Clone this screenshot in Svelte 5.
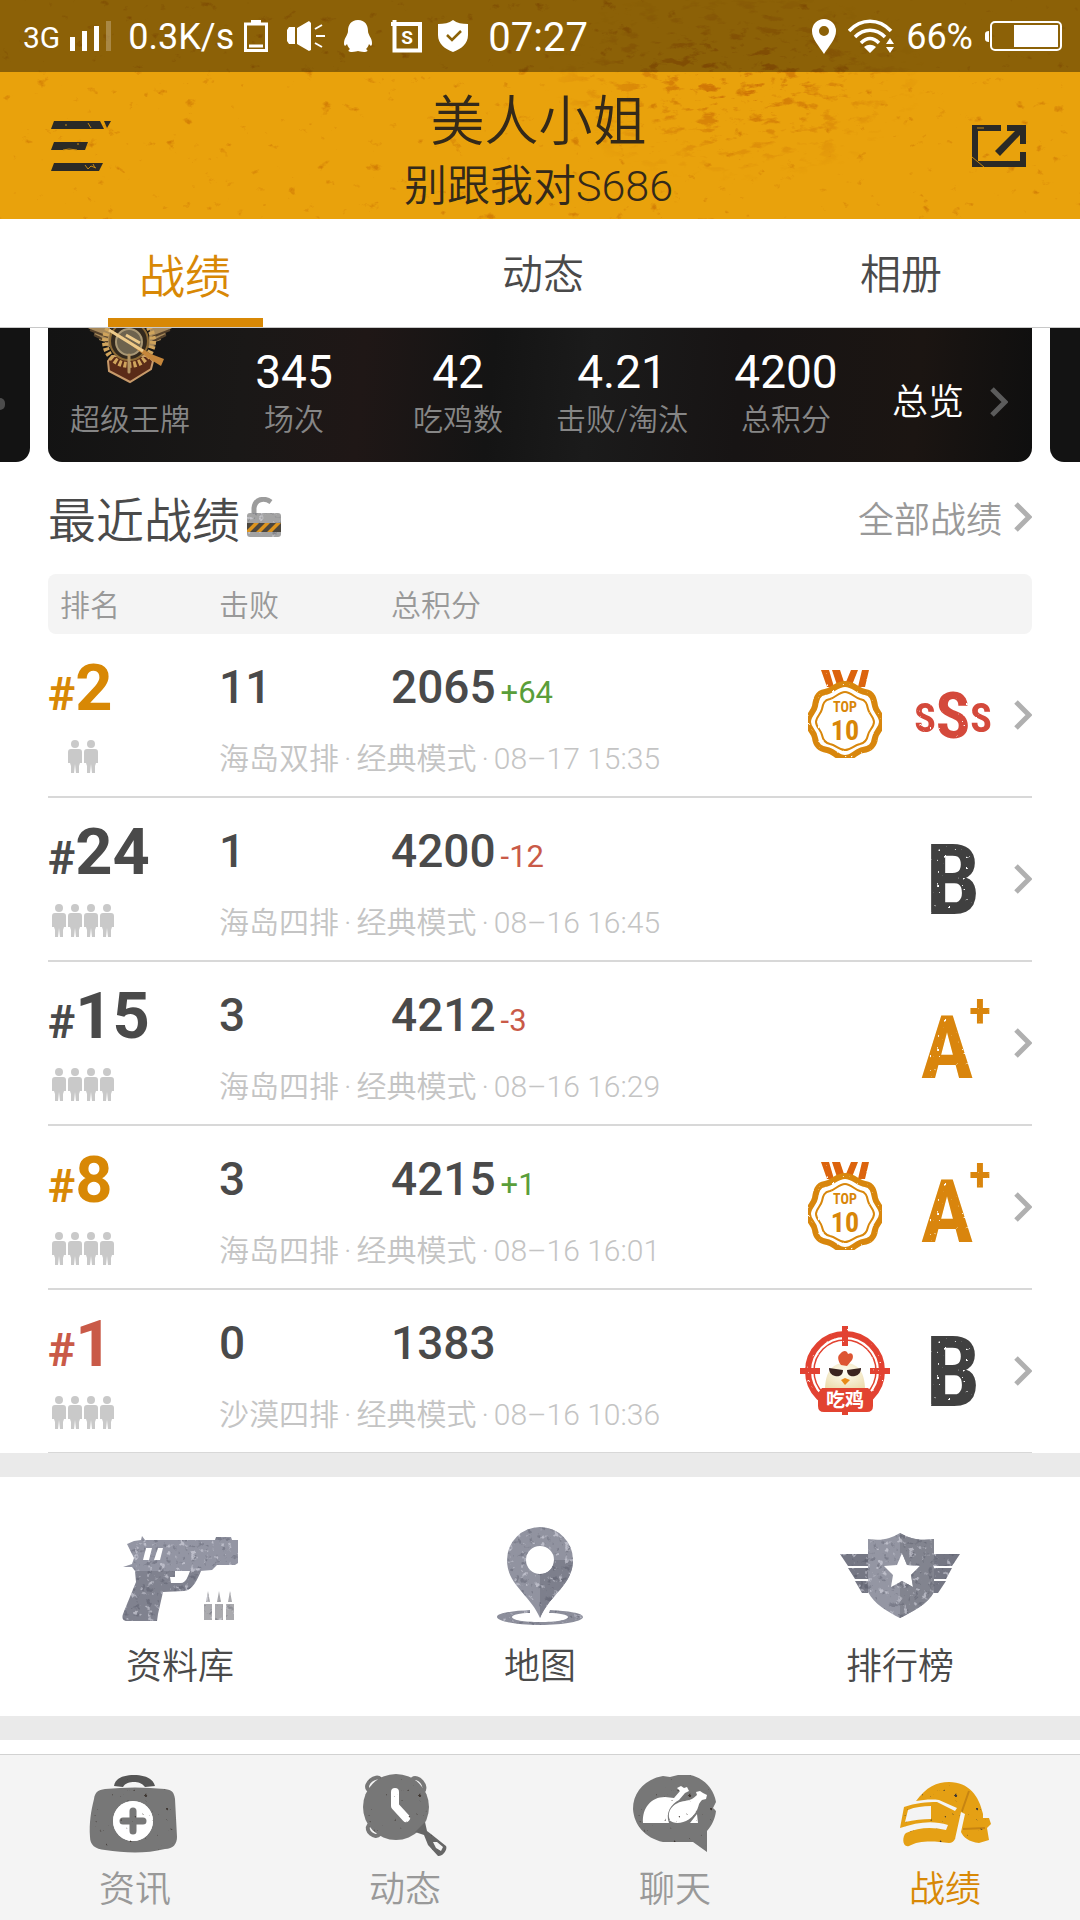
<script lang="ts">
	interface Match {
		rank: number;
		tone: 'gold' | 'dark' | 'red';
		players: number;
		kills: number;
		points: number;
		delta: string;
		map: string;
		time: string;
		medal: 'top10' | 'chicken' | '';
		grade: 'SSS' | 'A+' | 'B';
	}

	const tabs = ['战绩', '动态', '相册'];

	const stats = [
		{ value: '345', label: '场次' },
		{ value: '42', label: '吃鸡数' },
		{ value: '4.21', label: '击败/淘汰' },
		{ value: '4200', label: '总积分' }
	];

	const matches: Match[] = [
		{ rank: 2, tone: 'gold', players: 2, kills: 11, points: 2065, delta: '+64', map: '海岛双排', time: '08-17 15:35', medal: 'top10', grade: 'SSS' },
		{ rank: 24, tone: 'dark', players: 4, kills: 1, points: 4200, delta: '-12', map: '海岛四排', time: '08-16 16:45', medal: '', grade: 'B' },
		{ rank: 15, tone: 'dark', players: 4, kills: 3, points: 4212, delta: '-3', map: '海岛四排', time: '08-16 16:29', medal: '', grade: 'A+' },
		{ rank: 8, tone: 'gold', players: 4, kills: 3, points: 4215, delta: '+1', map: '海岛四排', time: '08-16 16:01', medal: 'top10', grade: 'A+' },
		{ rank: 1, tone: 'red', players: 4, kills: 0, points: 1383, delta: '', map: '沙漠四排', time: '08-16 10:36', medal: 'chicken', grade: 'B' }
	];

	let activeTab = $state('战绩');
	let activeNav = $state('战绩');
</script>

{#snippet chevron()}
	<svg class="chevron" width="18" height="30" viewBox="0 0 18 30" aria-hidden="true">
		<path d="M2 2l13 13L2 28" fill="none" stroke="currentColor" stroke-width="5" />
	</svg>
{/snippet}

{#snippet medal(kind: string)}
	{#if kind === 'top10'}
		<svg width="90" height="92" viewBox="0 0 90 92" role="img" aria-label="TOP 10">
			<g filter="url(#wear)">
				<path d="M21 1h8l5 17h-7zM32 1h8l4 12-7 3zM51 1h7l-6 15-6-3zM62 1h7l-4 17h-7z" fill="#dc6408" />
				<path
					d="M45 15C54 15 57 22 65 23C73 24 74 31 75 37C76 43 82 46 82 53C82 60 76 62 75 69C74 77 70 80 63 81C56 82 53 89 45 89C37 89 34 82 27 81C20 80 16 77 15 69C14 62 8 60 8 53C8 46 14 43 15 37C16 31 17 24 25 23C33 22 36 15 45 15Z"
					fill="none"
					stroke="#d88608"
					stroke-width="6"
				/>
				<path
					d="M45 23C51 23 55 29 60 30C66 31 67 35 68 40C69 45 74 48 74 53C74 58 69 61 68 66C67 71 65 74 60 75C54 76 51 81 45 81C39 81 36 76 30 75C25 74 23 71 22 66C21 61 16 58 16 53C16 48 21 45 22 40C23 35 24 31 30 30C35 29 39 23 45 23Z"
					fill="none"
					stroke="#d88608"
					stroke-width="2"
				/>
			</g>
			<text class="top-word" x="45" y="43">TOP</text>
			<text class="top-num" x="45" y="71">10</text>
		</svg>
	{:else if kind === 'chicken'}
		<svg width="90" height="90" viewBox="0 0 90 90" role="img" aria-label="吃鸡">
			<defs>
				<radialGradient id="egg" cx="0.5" cy="0.35" r="0.7">
					<stop offset="0" stop-color="#fffef4" />
					<stop offset="1" stop-color="#ecdcae" />
				</radialGradient>
			</defs>
			<g filter="url(#wear)" fill="none" stroke="#e24330">
				<circle cx="45" cy="45" r="37" stroke-width="6" />
				<circle cx="45" cy="45" r="31" stroke-width="1.5" />
				<path d="M45 0v20M0 45h20M70 45h20" stroke-width="6" />
			</g>
			<path d="M25 64C25 45 33 37 45 37S65 45 65 64Z" fill="url(#egg)" />
			<path d="M41 39c-3-4-4-9-1-11 3-4 7-4 8 0 5-3 6 3 4 6l-5 6z" fill="#dd5533" />
			<path d="M29 42l14 2c0 6-5 7-8 6-4-1-6-4-6-8zM61 42l-14 2c0 6 5 7 8 6 4-1 6-4 6-8z" fill="#3b2420" />
			<path d="M41 54l4-2 5 2-5 5z" fill="#e88b18" />
			<path d="M22 62h46l5 5v13q0 6-6 6H48v3h-6v-3H24q-6 0-6-6V67z" fill="#e24330" />
			<text class="chicken-word" x="45" y="81">吃鸡</text>
		</svg>
	{/if}
{/snippet}

{#snippet grade(name: string)}
	<svg width="80" height="120" viewBox="0 -15 80 120" role="img" aria-label={name}>
		<g class="grade" filter="url(#wear)">
			{#if name === 'SSS'}
				<text x="41" y="68" fill="#d4493b"><tspan font-size="40" dy="-6">S</tspan><tspan font-size="64" dy="6">S</tspan><tspan font-size="40" dy="-6">S</tspan></text>
			{:else if name === 'A+'}
				<text x="35" y="80" font-size="88" fill="#d98508">A</text>
				<text x="68" y="29" font-size="46" fill="#d98508">+</text>
			{:else}
				<text x="41" y="80" font-size="98" fill="#404040">B</text>
			{/if}
		</g>
	</svg>
{/snippet}

<svg class="defs" width="0" height="0" aria-hidden="true">
	<defs>
		<filter id="wear" x="0" y="0" width="100%" height="100%">
			<feTurbulence type="fractalNoise" baseFrequency="0.28" numOctaves="2" seed="8" result="noise" />
			<feColorMatrix in="noise" values="0 0 0 0 0  0 0 0 0 0  0 0 0 0 0  12 0 0 0 -8.8" result="holes" />
			<feComposite in="SourceGraphic" in2="holes" operator="out" />
		</filter>
		<filter id="metal" x="0" y="0" width="100%" height="100%" color-interpolation-filters="sRGB">
			<feTurbulence type="fractalNoise" baseFrequency="0.16" numOctaves="3" seed="5" result="noise" />
			<feColorMatrix in="noise" values="0 0 0 0 0.25  0 0 0 0 0.26  0 0 0 0 0.32  7 0 0 0 -4.2" result="dark" />
			<feColorMatrix in="noise" values="0 0 0 0 0.9  0 0 0 0 0.9  0 0 0 0 0.94  0 8 0 0 -5" result="light" />
			<feComposite in="dark" in2="SourceAlpha" operator="in" result="darkIn" />
			<feComposite in="light" in2="SourceAlpha" operator="in" result="lightIn" />
			<feComponentTransfer in="darkIn" result="darkSoft"><feFuncA type="linear" slope="0.3" /></feComponentTransfer>
			<feComponentTransfer in="lightIn" result="lightSoft"><feFuncA type="linear" slope="0.5" /></feComponentTransfer>
			<feMerge>
				<feMergeNode in="SourceGraphic" />
				<feMergeNode in="darkSoft" />
				<feMergeNode in="lightSoft" />
			</feMerge>
		</filter>
		<filter id="specks" x="0" y="0" width="100%" height="100%" color-interpolation-filters="sRGB">
			<feTurbulence type="fractalNoise" baseFrequency="0.2" numOctaves="2" seed="11" result="noise" />
			<feColorMatrix in="noise" values="0 0 0 0 0.25  0 0 0 0 0.22  0 0 0 0 0.2  12 0 0 0 -9" result="dark" />
			<feComposite in="dark" in2="SourceAlpha" operator="in" result="darkIn" />
			<feMerge>
				<feMergeNode in="SourceGraphic" />
				<feMergeNode in="darkIn" />
			</feMerge>
		</filter>
		<filter id="rust" x="0" y="0" width="100%" height="100%" color-interpolation-filters="sRGB">
			<feTurbulence type="fractalNoise" baseFrequency="0.06 0.08" numOctaves="5" seed="21" result="noise" />
			<feColorMatrix in="noise" values="0 0 0 0 0.83  0 0 0 0 0.5  0 0 0 0 0.02  6 0 0 0 -4.2" />
		</filter>
		<filter id="rust-fine" x="0" y="0" width="100%" height="100%" color-interpolation-filters="sRGB">
			<feTurbulence type="fractalNoise" baseFrequency="0.05 0.12" numOctaves="5" seed="4" result="noise" />
			<feColorMatrix in="noise" values="0 0 0 0 0.8  0 0 0 0 0.44  0 0 0 0 0.02  7 0 0 0 -4" />
		</filter>
		<radialGradient id="patch-fade" cx="0.5" cy="0.5" r="0.5">
			<stop offset="0" stop-color="#fff" />
			<stop offset="1" stop-color="#000" />
		</radialGradient>
		<mask id="patch" maskContentUnits="objectBoundingBox">
			<ellipse cx="0.68" cy="0.38" rx="0.18" ry="0.45" fill="url(#patch-fade)" />
		</mask>
	</defs>
</svg>

<div class="page">
	<div class="top">
		<svg class="texture" width="100%" height="100%" aria-hidden="true">
			<rect width="100%" height="100%" filter="url(#rust)" />
			<rect width="100%" height="100%" filter="url(#rust-fine)" mask="url(#patch)" />
		</svg>

		<div class="status">
			<span class="net">3G</span>
			<svg class="signal" width="42" height="30" viewBox="0 0 42 30" aria-hidden="true">
				<path d="M0 16h5v14H0zM12 10h5v20h-5zM24 5h5v25h-5z" fill="#fff" />
				<path d="M36 0h5v30h-5z" fill="#fff" opacity="0.25" />
			</svg>
			<span class="speed">0.3K/s</span>
			<svg class="low" width="24" height="32" viewBox="0 0 24 32" aria-hidden="true">
				<path d="M7 0h10v3H7z" fill="#fff" />
				<path d="M1.500 4h21v26.500h-21zM5 26h14" fill="none" stroke="#fff" stroke-width="3" />
			</svg>
			<svg class="sound" width="38" height="32" viewBox="0 0 38 32" aria-hidden="true">
				<path d="M2 7h6v17H2l-2-3V10zM10 8L22 1l2 2v27l-2 1-12-7z" fill="#fff" />
				<path d="M28 9l7-4M29 16h9M28 23l7 4" stroke="#fff" stroke-width="2" />
			</svg>
			<svg class="qq" width="28" height="32" viewBox="0 0 28 32" aria-hidden="true">
				<path d="M14 0c7 0 10 5 10 11 0 4 4 7 4 12 0 3-1 4-3 1-1 3-2 4-3 5 3 2 1 3-2 3-3 0-5-1-6-1s-3 1-6 1-5-1-2-3c-1-1-2-2-3-5-2 3-3 2-3-1 0-5 4-8 4-12C4 5 7 0 14 0z" fill="#fff" />
			</svg>
			<svg class="sbox" width="31" height="33" viewBox="0 0 31 33" aria-hidden="true">
				<path d="M3.500 0v30.500h25.500V4H0" fill="none" stroke="#fff" stroke-width="4" />
				<text x="16" y="24" text-anchor="middle" font-size="19" font-weight="700" fill="#fff">S</text>
			</svg>
			<svg class="guard" width="30" height="32" viewBox="0 0 30 32" aria-hidden="true">
				<path d="M15 0c4 3 9 4 15 4v11c0 9-7 14-15 17C7 29 0 24 0 15V4c6 0 11-1 15-4z" fill="#fff" />
				<path d="M9 15l5 5 9-9" fill="none" stroke="#8c6207" stroke-width="2.500" />
			</svg>
			<span class="clock">07:27</span>
			<svg class="place" width="24" height="35" viewBox="0 0 24 35" aria-hidden="true">
				<path d="M12 0a12 12 0 0 1 12 12c0 8-7 15-12 23C7 27 0 20 0 12A12 12 0 0 1 12 0zm0 7a5 5 0 1 0 0 10 5 5 0 0 0 0-10z" fill="#fff" />
			</svg>
			<svg class="wifi" width="46" height="34" viewBox="0 0 46 34" aria-hidden="true">
				<g fill="none" stroke="#fff" stroke-width="3.500">
					<path d="M1 12C13-1 31-1 43 12" />
					<path d="M7 18c9-9 21-9 30 0" />
					<path d="M13 24c6-6 12-6 18 0" />
				</g>
				<path d="M16 28c4-3 8-3 12 0l-6 6zM38 25l4-6 4 6zM38 28h8l-4 6z" fill="#fff" />
			</svg>
			<span class="percent">66%</span>
			<svg class="power" width="77" height="30" viewBox="0 0 77 30" aria-hidden="true">
				<path d="M4 10v11q-4 0-4-3v-5q0-3 4-3zM29 4h44v22H29z" fill="#fff" />
				<rect x="6" y="1" width="70" height="28" rx="4" fill="none" stroke="#fff" stroke-width="2" />
			</svg>
		</div>

		<header class="header">
			<button class="icon-btn" aria-label="menu">
				<svg width="60" height="50" viewBox="0 0 60 50">
					<path d="M3 0h46l4 8H0zM53 0h7l-4 7zM3 21h34l-3 8H0zM3 42h49l-4 8H0z" fill="#2b2a26" />
					<path d="M37 2l3 5M14 4h2M12 29l6-1 8 1M26 23h2M34 44l3 4 3-3 5 2M42 43l2 4" fill="none" stroke="#c98a10" stroke-width="1" />
				</svg>
			</button>
			<div class="names">
				<h1>美人小姐</h1>
				<p>别跟我对S686</p>
			</div>
			<button class="icon-btn share" aria-label="share">
				<svg width="54" height="42" viewBox="0 0 54 42">
					<path d="M29 3H3v36h48V27" fill="none" stroke="#2b2a26" stroke-width="6" />
					<path d="M35 0h19v19h-6v-9L28 31l-5-5L43 6h-8z" fill="#2b2a26" />
					<path d="M0 32l12 10M5 3h7" stroke="#c98a10" stroke-width="1" />
				</svg>
			</button>
		</header>
	</div>

	<nav class="tabs">
		{#each tabs as tab}
			<button class:active={activeTab === tab} onclick={() => (activeTab = tab)}>{tab}</button>
		{/each}
	</nav>

	<main>
		<div class="carousel">
			<div class="card side left"></div>
			<section class="card summary">
				<div class="stat tier">
					<svg class="emblem" width="84" height="58" viewBox="0 0 84 58" aria-hidden="true">
						<path d="M0 0h22l2 20-8-3 1-3-6-2 1-3-6-2 1-3zM84 0H62l-2 20 8-3-1-3 6-2-1-3 6-2-1-3z" fill="#a8895a" />
						<path d="M2 2l18 7M6 7l14 7M82 2L64 9M78 7l-14 7" stroke="#54402a" stroke-width="2" />
						<path d="M20 33l4-5h36l5 5-2 8-21 13-21-11z" fill="#5a2b18" stroke="#c79a6a" stroke-width="2" />
						<circle cx="41" cy="13" r="24" fill="none" stroke="#d0a45c" stroke-width="6" stroke-dasharray="3 2" />
						<circle cx="41" cy="13" r="19" fill="#33291d" stroke="#8c6a35" stroke-width="2" />
						<circle cx="41" cy="14" r="13" fill="#6d634e" stroke="#a99875" stroke-width="2" />
						<path d="M41 27v17" stroke="#b49563" stroke-width="3" stroke-linecap="round" />
						<path d="M22 1l41 25 13 5-3 7-13-8z" fill="#c5863b" />
						<path d="M21 2l34 21M38 7l14 8" stroke="#ecca8a" stroke-width="3" />
					</svg>
					<span class="stat-label">超级王牌</span>
				</div>
				{#each stats as stat}
					<div class="stat">
						<strong>{stat.value}</strong>
						<span class="stat-label">{stat.label}</span>
					</div>
				{/each}
				<a class="overview" href="#overview"><span>总览</span>{@render chevron()}</a>
			</section>
			<div class="card side right"></div>
			<span class="side-arrow"></span>
		</div>

		<section class="recent">
			<div class="recent-head">
				<h2>最近战绩</h2>
				<svg width="34" height="40" viewBox="0 0 34 40" aria-hidden="true">
					<path d="M7 17V11C8 2 17 0 24 5" fill="none" stroke="#9c9c9c" stroke-width="5" />
					<g filter="url(#metal)"><rect y="16" width="34" height="24" rx="3" fill="#a3a3a3" /></g>
					<path d="M0 26h34v9H0z" fill="#4b463e" />
					<path d="M0 35v-2l7-7h5l-9 9zM9 35l9-9h5l-9 9zM20 35l9-9h5l-9 9z" fill="#dc941e" />
				</svg>
				<a class="all" href="#all">全部战绩 {@render chevron()}</a>
			</div>

			<table>
				<thead>
					<tr>
						<th class="c-rank">排名</th>
						<th class="c-kills">击败</th>
						<th class="c-points">总积分</th>
						<th class="c-badges" aria-label="评级"></th>
					</tr>
				</thead>
				{#each matches as m}
					<tbody>
						<tr class="line-main">
							<td class="rank {m.tone}"><small>#</small>{m.rank}</td>
							<td class="num">{m.kills}</td>
							<td class="num">
								{m.points}{#if m.delta}<span class="delta" class:down={m.delta.startsWith('-')}>{m.delta}</span>{/if}
							</td>
							<td class="badges" rowspan="2">
								<a href="#match-{m.rank}" aria-label="详情">
									{@render medal(m.medal)}
									{@render grade(m.grade)}
									{@render chevron()}
								</a>
							</td>
						</tr>
						<tr class="line-sub">
							<td>
								<div class="players">
									{#each Array(m.players) as _}
										<svg width="14" height="33" viewBox="0 0 14 33" aria-hidden="true">
											<circle cx="7" cy="4" r="4" />
											<path d="M3 9h8q3 0 3 3v11h-2l-1 3v7H8l-1-9-1 9H3v-7l-1-3H0V12q0-3 3-3z" />
										</svg>
									{/each}
								</div>
							</td>
							<td colspan="2">
								<div class="meta">
									<span>{m.map}</span><span>·</span><span>经典模式</span><span>·</span><span class="time">{m.time.replace('-', '–')}</span>
								</div>
							</td>
						</tr>
					</tbody>
				{/each}
			</table>
		</section>

		<section class="tools">
			<a href="#library">
				<svg width="116" height="98" viewBox="0 -9 116 98" aria-hidden="true">
					<g filter="url(#metal)">
						<path d="M5 8l7-3 7-1 1-4 3 4h70l1-3h15l1 3h6v23l-3 2H95l-5 5-12 1H13l-3-4H1l9-3 2-6-4-8zM24 12l-3 12h6l3-12zm12 0l-4 12h6l3-12z" fill="#9395a3" fill-rule="evenodd" />
						<path d="M13 35h66c-4 9-8 19-17 20l-21 1-5 22-1 7H4q-5-1-3-7l13-32zM53 35v6h-5l1 6h10c5 0 7-7 9-12z" fill="#80828f" fill-rule="evenodd" />
						<path d="M82 68h8v16h-8zM93 68h8v16h-8zM104 68h8v16h-8zM84 66l2-11 2 11zM95 66l2-11 2 11zM106 66l2-11 2 11z" fill="#aaaaae" />
					</g>
				</svg>
				<span>资料库</span>
			</a>
			<a href="#map">
				<svg width="88" height="98" viewBox="0 0 88 98" aria-hidden="true">
					<g filter="url(#metal)">
						<path d="M34 83C16 84 1 86 1 90s18 8 43 8 43-4 43-8-15-6-33-7l-1 3c10 0 19 2 19 4 0 3-12 5-28 5s-28-2-28-5c0-2 8-4 18-4z" fill="#8c8e9b" />
						<path d="M44 0a33 33 0 0 1 33 33C77 58 54 67 44 91 34 67 11 58 11 33A33 33 0 0 1 44 0zm0 19a14 14 0 1 0 0 28 14 14 0 0 0 0-28z" fill="#9193a0" />
						<path d="M44 47c8 0 14-6 14-14h19C77 58 54 67 44 91z" fill="#7d7f8c" />
					</g>
				</svg>
				<span>地图</span>
			</a>
			<a href="#ranking">
				<svg width="120" height="98" viewBox="0 -6 120 98" aria-hidden="true">
					<g filter="url(#metal)">
						<path d="M0 21h28v12H8zM8 35h20v11H15zM15 48h13v12h-6zM120 21H94v12h18zM112 35H94v11h12zM106 48H94v12h4z" fill="#757784" />
						<path d="M28 6c14 2 22 0 32-6 10 6 20 8 34 6v53c-6 12-22 20-34 26-12-6-26-14-32-26zM62 20l-5 12-13 1 9 9-2 12 11-6 11 6-2-12 9-9-13-1z" fill="#9496a3" fill-rule="evenodd" />
						<path d="M60 49l2-1 11 6-2-12 9-9-13-1-5-12h-2V0c10 6 20 8 34 6v53c-6 12-22 20-34 26z" fill="#82848f" />
					</g>
				</svg>
				<span>排行榜</span>
			</a>
		</section>
	</main>

	<nav class="bottom">
		<button class:active={activeNav === '资讯'} onclick={() => (activeNav = '资讯')}>
			<svg width="92" height="84" viewBox="0 -2 92 84" filter="url(#specks)" aria-hidden="true">
				<path d="M25 11C26 3 35 0 45 0s19 3 21 11l-10 1c-3-4-7-5-11-5s-9 1-11 5z" fill="#555" />
				<path d="M16 14c20-2 40-2 60 0 7 1 9 3 10 10l2 38c0 7-4 12-12 12-20 5-40 4-60 1C6 74 1 70 1 62 0 48 2 36 5 24c1-7 4-9 11-10zM44 26a20 20 0 1 0 0 40 20 20 0 0 0 0-40z" fill="#777" fill-rule="evenodd" />
				<circle cx="44" cy="46" r="20" fill="#fff" />
				<path d="M44 36v20M34 46h20" stroke="#777" stroke-width="7" stroke-linecap="round" />
			</svg>
			<span>资讯</span>
		</button>
		<button class:active={activeNav === '动态'} onclick={() => (activeNav = '动态')}>
			<svg width="84" height="84" viewBox="0 -1 84 84" filter="url(#specks)" aria-hidden="true">
				<g fill="none" stroke="#777" stroke-width="4">
					<ellipse cx="11" cy="10" rx="8" ry="5" transform="rotate(-40 11 10)" />
					<ellipse cx="55" cy="11" rx="8" ry="5" transform="rotate(50 55 11)" />
					<ellipse cx="11" cy="56" rx="7" ry="5" transform="rotate(40 11 56)" />
				</g>
				<circle cx="33" cy="33" r="33" fill="#777" />
				<path d="M32 18v14l11 12" fill="none" stroke="#fff" stroke-width="8" stroke-linecap="round" stroke-linejoin="round" />
				<path d="M62 48l2 9 4 3 15 12c2 4-4 11-8 10l-10-11-4-10-9-3zM70 68l3 6 5 3 2-4-6-5z" fill="#666" fill-rule="evenodd" />
			</svg>
			<span>动态</span>
		</button>
		<button class:active={activeNav === '聊天'} onclick={() => (activeNav = '聊天')}>
			<svg width="84" height="84" viewBox="0 -2 84 84" filter="url(#specks)" aria-hidden="true">
				<path d="M30 1l7 1 8-2h12c14 3 24 14 26 27l-3 6 3 3c-1 8-4 14-9 20v21L60 67H30c-18-4-29-17-30-33C0 17 12 4 30 1z" fill="#777" />
				<path d="M10 48c-1-15 8-26 22-26l9 1 6-7-3-3 4-2 3 2 3-1 2 4-4 2-6 7C38 29 32 38 36 48z" fill="#fff" />
				<path d="M37 45c-4-9 4-18 15-19 5-1 8-2 12-6l-1-3 4-1 3 2 4 2-1 4-4 1c-4 4-3 6-5 10-5 11-20 17-28 10zM57 48l7-9 1 9z" fill="#fff" />
			</svg>
			<span>聊天</span>
		</button>
		<button class:active={activeNav === '战绩'} onclick={() => (activeNav = '战绩')}>
			<svg width="92" height="84" viewBox="0 -9 92 84" filter="url(#specks)" aria-hidden="true">
				<path
					d="M17 19C27 5 38 0 50 0C70 0 80 14 84 32L84 36L90 36L92 42L88 46L90 58L80 61C70 60 64 55 62 50L66 32L62 30L56 57Q54 61 50 61C36 59 20 58 10 64C3 66 3 54 7 51C20 45 34 45 47 48L49 43C34 38 18 40 1 46L5 25C16 21 28 20 38 20L56 29L58 26L40 18C32 17 24 18 17 19ZM9 28L6 40C15 38 24 37 32 37V24C24 24 16 25 9 28Z"
					fill="#e5a014"
					fill-rule="evenodd"
				/>
				<path d="M70 9l-7 20M64 47l22-1" fill="none" stroke="#c78412" stroke-width="2" />
			</svg>
			<span>战绩</span>
		</button>
	</nav>
</div>

<style>
	:global(body) {
		margin: 0;
		background: #fff;
	}

	.page {
		min-height: 100vh;
		display: flex;
		flex-direction: column;
		font-family: Roboto, 'Noto Sans CJK SC', sans-serif;
		font-weight: 350;
		color: #4a4a4a;
	}

	.defs,
	.texture {
		position: absolute;
	}

	svg {
		display: block;
		flex-shrink: 0;
	}

	button {
		font: inherit;
		color: inherit;
		background: none;
		border: none;
		padding: 0;
		cursor: pointer;
	}

	a {
		color: inherit;
		text-decoration: none;
	}

	h1,
	h2,
	p {
		margin: 0;
		font-weight: inherit;
	}

	.top {
		position: relative;
		background: #e9a20c;
	}

	.texture {
		inset: 0;
	}

	.status {
		position: relative;
		display: flex;
		align-items: center;
		height: 72px;
		padding: 0 18px 0 23px;
		box-sizing: border-box;
		background: rgba(0, 0, 0, 0.4);
		color: #fff;
		font-weight: 400;
		font-size: 36px;
	}

	.status span {
		padding-top: 2px;
	}

	.status .net {
		font-size: 30px;
	}

	.signal {
		margin-left: 10px;
	}

	.speed {
		margin-left: 16px;
	}

	.low {
		margin-left: 10px;
	}

	.sound,
	.qq,
	.sbox {
		margin-left: 19px;
	}

	.guard {
		margin-left: 16px;
	}

	.clock {
		margin-left: 20px;
		font-size: 40px;
	}

	.place {
		margin-left: auto;
	}

	.wifi,
	.percent,
	.power {
		margin-left: 12px;
	}

	.header {
		position: relative;
		display: grid;
		grid-template-columns: 1fr auto 1fr;
		align-items: center;
		height: 147px;
		padding: 0 54px 0 51px;
		box-sizing: border-box;
		color: #33291a;
	}

	.icon-btn {
		justify-self: start;
	}

	.icon-btn.share {
		justify-self: end;
	}

	.names {
		padding-top: 14px;
		text-align: center;
	}

	.names h1 {
		font-size: 54px;
		line-height: 66px;
	}

	.names p {
		font-size: 43px;
		line-height: 60px;
	}

	.tabs {
		display: grid;
		grid-template-columns: repeat(3, 1fr);
		height: 109px;
		padding-left: 6px;
		box-sizing: border-box;
		border-bottom: 1px solid #c8c8c8;
	}

	.tabs button {
		justify-self: center;
		width: 155px;
		padding-top: 4px;
		font-size: 41px;
		border-bottom: 9px solid transparent;
	}

	.tabs .active {
		padding-top: 8px;
		font-size: 46px;
		color: #d88805;
		border-bottom-color: #d88805;
	}

	.carousel {
		position: relative;
		display: flex;
		gap: 18px;
		height: 134px;
		overflow: hidden;
	}

	.card {
		border-radius: 0 0 14px 14px;
		background: #131313;
	}

	.card.side {
		width: 30px;
		flex-shrink: 0;
	}

	.side.left {
		border-bottom-left-radius: 0;
	}

	.side.right {
		border-bottom-right-radius: 0;
	}

	.summary {
		flex: 1;
		display: grid;
		grid-template-columns: repeat(6, 1fr);
		color: #fff;
		background: linear-gradient(95deg, #131313, #1a1817 20%, #1f1716 32%, #141414 45%, #1b1b1b 55%, #171414 70%, #1b1512 88%, #0f0f0f);
	}

	.stat {
		display: flex;
		flex-direction: column;
		align-items: center;
		justify-content: flex-end;
		padding-bottom: 21px;
	}

	.stat strong {
		font-size: 46px;
		line-height: 54px;
		font-weight: 400;
	}

	.stat-label {
		font-size: 30px;
		line-height: 42px;
		color: #868686;
		white-space: nowrap;
	}

	.tier {
		justify-content: space-between;
	}

	.overview {
		display: flex;
		align-items: center;
		justify-content: flex-end;
		gap: 26px;
		padding: 14px 24px 0 0;
		font-size: 36px;
	}

	.overview span {
		padding-bottom: 6px;
	}

	.overview .chevron {
		color: #5c5c5c;
	}

	.side-arrow {
		position: absolute;
		left: 0;
		top: 70px;
		width: 5px;
		height: 12px;
		border-radius: 0 6px 6px 0;
		background: #4c4c4c;
	}

	.recent {
		padding: 0 48px;
	}

	.recent-head {
		display: flex;
		align-items: center;
		height: 112px;
		padding-bottom: 2px;
		box-sizing: border-box;
	}

	h2 {
		margin-right: 7px;
		font-size: 48px;
	}

	.all {
		display: flex;
		align-items: center;
		gap: 12px;
		margin-left: auto;
		font-size: 36px;
		color: #999;
	}

	.chevron {
		color: #b0b0b0;
	}

	table {
		width: 100%;
		table-layout: fixed;
		border-spacing: 0;
	}

	th {
		height: 60px;
		padding: 0 0 3px;
		box-sizing: border-box;
		background: #f4f4f4;
		font-size: 30px;
		font-weight: inherit;
		color: #999;
		text-align: left;
	}

	th:first-child {
		padding-left: 12px;
		border-radius: 8px 0 0 8px;
	}

	th:last-child {
		border-radius: 0 8px 8px 0;
	}

	.c-rank {
		width: 171px;
	}

	.c-kills {
		width: 172px;
	}

	.c-points {
		width: 320px;
	}

	td {
		padding: 0;
		vertical-align: top;
	}

	.line-main {
		height: 94px;
	}

	.line-sub {
		height: 70px;
	}

	.line-sub td,
	.badges {
		border-bottom: 2px solid #d8d8d8;
	}

	.rank {
		padding-top: 18px;
		font-size: 65px;
		line-height: 72px;
		font-weight: 700;
	}

	.rank small {
		font-size: 46px;
		line-height: 1;
	}

	.gold {
		color: #d88805;
	}

	.red {
		color: #c95a48;
	}

	.num {
		padding-top: 25px;
		font-size: 46px;
		line-height: 56px;
		font-weight: 500;
		white-space: nowrap;
	}

	.delta {
		margin-left: 5px;
		font-size: 31px;
		font-weight: 400;
		color: #5a9e3a;
	}

	.delta.down {
		color: #c95a48;
	}

	.players {
		display: flex;
		justify-content: center;
		gap: 2px;
		width: 70px;
		padding-top: 12px;
		fill: #c9c9c9;
	}

	.meta {
		display: flex;
		gap: 5px;
		padding-top: 9px;
		font-size: 30px;
		line-height: 44px;
		color: #c4c4c4;
		white-space: nowrap;
	}

	.badges {
		vertical-align: middle;
	}

	.badges a {
		display: flex;
		align-items: center;
		justify-content: flex-end;
		gap: 22px;
	}

	.top-word,
	.top-num,
	.chicken-word,
	.grade {
		font-family: 'Roboto Condensed', Roboto, 'Noto Sans CJK SC', sans-serif;
		text-anchor: middle;
		font-weight: 700;
	}

	.top-word {
		font-size: 14px;
		fill: #d88608;
	}

	.top-num {
		font-size: 28px;
		fill: #d88608;
	}

	.chicken-word {
		font-size: 19px;
		fill: #fff;
	}

	.tools {
		display: grid;
		grid-template-columns: repeat(3, 1fr);
		height: 239px;
		border-top: 24px solid #eaeaea;
		border-bottom: 24px solid #eaeaea;
		margin-top: -1px;
		margin-bottom: 14px;
	}

	.tools a {
		display: flex;
		flex-direction: column;
		align-items: center;
		gap: 15px;
		padding-top: 50px;
		font-size: 36px;
		line-height: 54px;
	}

	.bottom {
		display: grid;
		grid-template-columns: repeat(4, 1fr);
		height: 165px;
		margin-top: auto;
		border-top: 1px solid #d2d2d2;
		background: #f4f4f4;
		color: #999;
	}

	.bottom button {
		display: flex;
		flex-direction: column;
		align-items: center;
		gap: 6px;
		padding-top: 18px;
		font-size: 36px;
		line-height: 54px;
	}

	.bottom .active {
		color: #d88805;
	}
</style>
